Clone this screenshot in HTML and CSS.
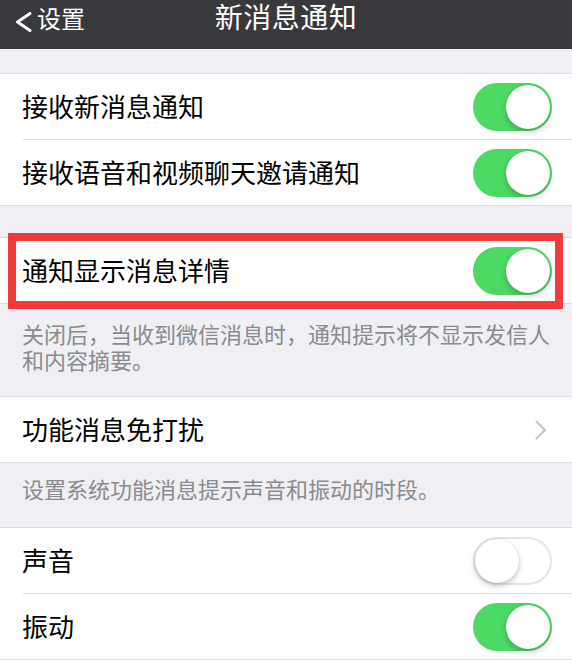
FILE: index.html
```html
<!DOCTYPE html>
<html lang="zh-CN">
<head>
<meta charset="utf-8">
<title>新消息通知</title>
<link rel="stylesheet" href="styles.css">
</head>
<body>
<div class="screen">
  <header class="navbar">
    <div class="back">
      <svg class="back-icon" width="18" height="20" viewBox="0 0 18 20"><path d="M15 1.5 L2.5 10 L15 18.5" fill="none" stroke="#fff" stroke-width="3" stroke-linecap="round" stroke-linejoin="round"/></svg>
      <span class="back-text">设置</span>
    </div>
    <div class="title">新消息通知</div>
  </header>

  <div class="gap gap-top"></div>
  <section class="group">
    <div class="row">
      <span class="label">接收新消息通知</span>
      <span class="switch on"><span class="knob"></span></span>
    </div>
    <div class="row sep">
      <span class="label">接收语音和视频聊天邀请通知</span>
      <span class="switch on"><span class="knob"></span></span>
    </div>
  </section>

  <div class="gap gap-mid"></div>
  <section class="group">
    <div class="row highlighted">
      <span class="label">通知显示消息详情</span>
      <span class="switch on"><span class="knob"></span></span>
      <span class="red-frame"></span>
    </div>
  </section>
  <p class="footnote two-line">关闭后，当收到微信消息时，通知提示将不显示发信人和内容摘要。</p>

  <section class="group">
    <div class="row">
      <span class="label">功能消息免打扰</span>
      <svg class="chevron" width="14" height="22" viewBox="0 0 14 22"><path d="M2.5 2.5 L11 11 L2.5 19.5" fill="none" stroke="#c4c4c9" stroke-width="2.2" stroke-linecap="round" stroke-linejoin="round"/></svg>
    </div>
  </section>
  <p class="footnote one-line">设置系统功能消息提示声音和振动的时段。</p>

  <section class="group">
    <div class="row">
      <span class="label">声音</span>
      <span class="switch off"><span class="knob"></span></span>
    </div>
    <div class="row sep">
      <span class="label">振动</span>
      <span class="switch on"><span class="knob"></span></span>
    </div>
  </section>
</div>
</body>
</html>
```

FILE: styles.css
```css
* { box-sizing: border-box; }

html, body {
  margin: 0;
  padding: 0;
  background: #efeff4;
}

body {
  font-family: "Noto Sans CJK SC", "Noto Sans", sans-serif;
  color: #000;
}

.screen {
  width: 572px;
  height: 660px;
  overflow: hidden;
  background: #efeff4;
}

.navbar {
  height: 49px;
  background: #39383d;
  display: flex;
  align-items: flex-start;
  justify-content: center;
  position: relative;
  color: #fff;
}

.back {
  position: absolute;
  left: 15px;
  top: 0;
  height: 36px;
  display: flex;
  align-items: center;
  gap: 4px;
}

.back-icon { display: block; margin-top: 7px; }

.back-text {
  font-size: 24px;
  line-height: 1;
}

.title {
  font-size: 28px;
  line-height: 32px;
  margin-top: 0;
  letter-spacing: 0.5px;
}

.gap-top { height: 24px; }
.gap-mid { height: 31px; }

.group {
  background: #fff;
  border-top: 1px solid #dcdce0;
  border-bottom: 1px solid #dcdce0;
}

.row {
  height: 65px;
  display: flex;
  align-items: center;
  justify-content: space-between;
  padding: 0 20px 0 22px;
  position: relative;
}

.row.sep {
  height: 66px;
  border-top: 1px solid transparent;
}

.row.sep::before {
  content: "";
  position: absolute;
  left: 23px;
  right: 0;
  top: -1px;
  height: 1px;
  background: #dcdce0;
}

.label {
  font-size: 26px;
  line-height: 1;
  margin-top: -2px;
}

.switch {
  width: 79px;
  height: 48px;
  border-radius: 24px;
  position: relative;
  flex: none;
}

.switch.on {
  background: #4cd964;
}

.switch.off {
  background: #fff;
  border: 2px solid #e4e4e8;
}

.knob {
  position: absolute;
  width: 44px;
  height: 44px;
  border-radius: 50%;
  background: #fff;
  box-shadow: 0 3px 6px rgba(0, 0, 0, 0.22), 0 0 1px rgba(0, 0, 0, 0.2);
}

.switch.on .knob { top: 2px; right: 2px; }
.switch.off .knob { top: 0; left: 0; }

.chevron { display: block; margin-right: 4px; }

.red-frame {
  position: absolute;
  top: -5px;
  bottom: -6px;
  left: 8px;
  right: 9px;
  border: 8px solid #f03a3c;
  pointer-events: none;
}

.footnote {
  margin: 0;
  color: #8a8a8f;
  font-size: 22px;
  line-height: 26px;
  padding-left: 22px;
  padding-right: 10px;
}

.footnote.two-line {
  padding-top: 16px;
  padding-bottom: 24px;
}

.footnote.one-line {
  padding-top: 12px;
  padding-bottom: 26px;
}
```
